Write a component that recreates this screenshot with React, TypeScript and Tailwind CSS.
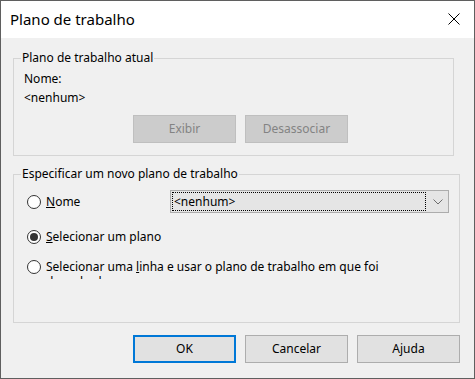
import React from 'react';

const font = { fontFamily: '"Noto Sans", "Open Sans", sans-serif' };

const Radio: React.FC<{ checked?: boolean }> = ({ checked }) => (
  <span className="flex h-[14px] w-[14px] shrink-0 items-center justify-center rounded-full border border-[#333333] bg-white">
    {checked && <span className="h-[8px] w-[8px] rounded-full bg-[#333333]" />}
  </span>
);

const DlgButton: React.FC<{ label: string; focused?: boolean; disabled?: boolean }> = ({
  label,
  focused,
  disabled,
}) => (
  <button
    className={
      disabled
        ? 'h-[28px] w-[103px] border border-[#bfbfbf] bg-[#cccccc] text-[#838383]'
        : focused
          ? 'h-[28px] w-[103px] border-2 border-[#0078d7] bg-[#e1e1e1] text-black'
          : 'h-[28px] w-[103px] border border-[#adadad] bg-[#e1e1e1] text-black'
    }
  >
    {label}
  </button>
);

// Windows style group box: border with caption sitting on the top edge
const GroupBox: React.FC<{ title: string; className: string; children: React.ReactNode }> = ({
  title,
  className,
  children,
}) => (
  <div className={`relative border border-[#d5d5d5] ${className}`}>
    <span className="absolute left-[7px] top-[-9px] bg-[#f0f0f0] px-[1px] leading-[16px]">{title}</span>
    {children}
  </div>
);

export default function App() {
  return (
    <div
      className="flex h-[379px] w-[475px] flex-col overflow-hidden border border-[#5f5f5f] bg-[#f0f0f0] text-[12px] text-black"
      style={font}
    >
      {/* Title bar */}
      <div className="flex h-[37px] shrink-0 items-center justify-between bg-white pl-[9px] pr-[14px]">
        <span className="text-[15px]">Plano de trabalho</span>
        <svg width="12" height="12" viewBox="0 0 12 12" className="mb-[1px]">
          <path d="M0.5 0.5 L11.5 11.5 M11.5 0.5 L0.5 11.5" stroke="#000" strokeWidth="1" />
        </svg>
      </div>

      <div className="flex flex-col px-[12px]">
        {/* Current plane */}
        <GroupBox title="Plano de trabalho atual" className="mt-[20px] h-[98px] w-[441px] pl-[10px] pt-[10px]">
          <div className="leading-[19px]">Nome:</div>
          <div className="leading-[19px]">&lt;nenhum&gt;</div>
          <div className="mt-[8px] flex gap-[9px] pl-[109px]">
            <DlgButton label="Exibir" disabled />
            <DlgButton label="Desassociar" disabled />
          </div>
        </GroupBox>

        {/* New plane */}
        <GroupBox
          title="Especificar um novo plano de trabalho"
          className="mt-[18px] h-[149px] w-[447px] pl-[13px] pt-[15px]"
        >
          <div className="flex h-[23px] items-center">
            <Radio />
            <span className="ml-[5px] w-[124px]">
              <span className="underline">N</span>ome
            </span>
            <div className="flex h-[23px] w-[279px] items-center border border-[#acacac] bg-[#e5e5e5]">
              <div className="ml-[1px] flex h-[19px] w-[254px] items-center border border-dotted border-black pl-[1px]">
                &lt;nenhum&gt;
              </div>
              <svg width="10" height="6" viewBox="0 0 10 6" className="ml-[7px]">
                <path d="M0.5 0.5 L5 5 L9.5 0.5" fill="none" stroke="#6d6d6d" strokeWidth="1" />
              </svg>
            </div>
          </div>
          <div className="mt-[14px] flex h-[20px] items-center">
            <Radio checked />
            <span className="ml-[5px]">
              <span className="underline">S</span>elecionar um plano
            </span>
          </div>
          <div className="mt-[12px] flex items-start">
            <span className="mt-[1px]">
              <Radio />
            </span>
            <div className="ml-[5px] h-[20px] w-[360px] overflow-hidden leading-[15px]">
              Selecionar uma <span className="underline">l</span>inha e usar o plano de trabalho em que foi
              desenhado
            </div>
          </div>
        </GroupBox>

        {/* Dialog buttons */}
        <div className="mt-[12px] flex gap-[9px] pl-[120px]">
          <DlgButton label="OK" focused />
          <DlgButton label="Cancelar" />
          <DlgButton label="Ajuda" />
        </div>
      </div>
    </div>
  );
}
